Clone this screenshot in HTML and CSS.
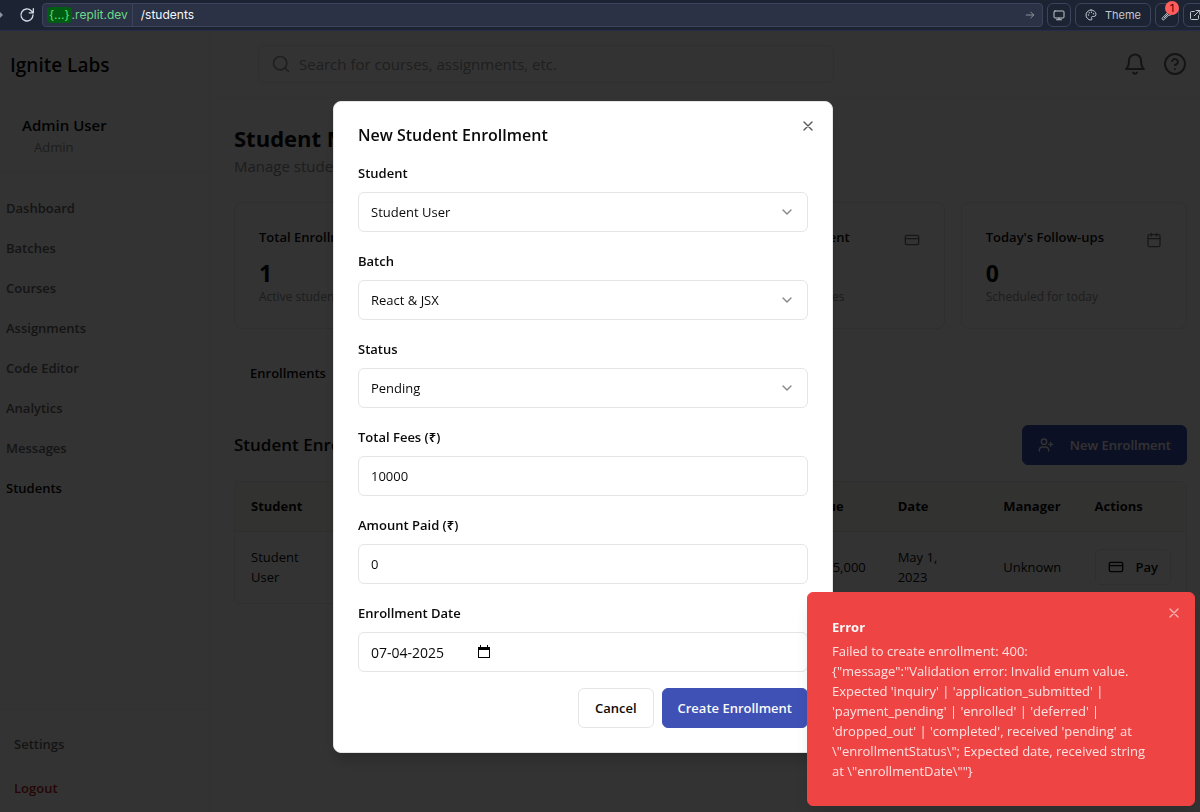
FILE: index.html
```html
<!DOCTYPE html>
<html lang="en">
<head>
<meta charset="utf-8">
<meta name="viewport" content="width=device-width, initial-scale=1">
<title>Ignite Labs - Students</title>
<link rel="stylesheet" href="styles.css">
</head>
<body>
<div class="browser-bar">
  <svg class="edge-arrow" viewBox="0 0 4 10"><path d="M0 2l3 3-3 3z"/></svg>
  <button class="reload" aria-label="Reload">
    <svg class="icon" viewBox="0 0 24 24"><path d="M21 12a9 9 0 1 1-2.600-6.400L21 8.200"/><path d="M21.500 2.500v6.200h-6.200"/></svg>
  </button>
  <div class="url">
    <div class="host"><span class="chip">{...}</span><span>.replit.dev</span></div>
    <input class="path" aria-label="Path" value="/students">
    <svg class="icon go" viewBox="0 0 24 24"><path d="M3 12h18M14 5l7 7-7 7"/></svg>
  </div>
  <button class="tool" aria-label="Device size">
    <svg class="icon" viewBox="0 0 24 24"><rect x="2" y="4" width="20" height="14" rx="2"/><path d="M7 21.500h10M12 18v3"/></svg>
  </button>
  <button class="tool theme">
    <svg class="icon" viewBox="0 0 24 24"><path d="M12 2a10 10 0 0 0 0 20c1.500 0 2-1 2-2 0-1.600-1.200-1.800-1.200-3.200 0-1.200 1-1.800 2.200-1.800h2.500A4.500 4.500 0 0 0 22 10.500C22 6 17.500 2 12 2z"/><circle class="dot" cx="7" cy="12" r="1.300"/><circle class="dot" cx="8.500" cy="7.500" r="1.300"/><circle class="dot" cx="13" cy="6.500" r="1.300"/><circle class="dot" cx="17" cy="9.500" r="1.300"/></svg>
    <span>Theme</span>
  </button>
  <button class="tool" aria-label="Developer tools">
    <svg class="icon" viewBox="0 0 24 24"><path d="M14 7.500a5 5 0 0 1 6.500-4.700l-3 3 .7 2.200 2.200.7 1.600-2.700A5 5 0 0 1 15.500 12L6.500 21a2.300 2.300 0 0 1-3.500-3.500l9-9"/><path d="M6 18l8-8"/></svg>
    <span class="badge">1</span>
  </button>
  <button class="tool last" aria-label="Open in new tab">
    <svg class="icon" viewBox="0 0 24 24"><path d="M19 13.500V19a2 2 0 0 1-2 2H5a2 2 0 0 1-2-2V7a2 2 0 0 1 2-2h5.500M14 3h7.500v7.500M21 3L10.500 13.500"/></svg>
  </button>
</div>

<div class="app">
  <aside class="sidebar">
    <div class="brand">Ignite Labs</div>
    <div class="user"><strong>Admin User</strong><span>Admin</span></div>
    <nav class="nav">
      <a href="#">Dashboard</a>
      <a href="#">Batches</a>
      <a href="#">Courses</a>
      <a href="#">Assignments</a>
      <a href="#">Code Editor</a>
      <a href="#">Analytics</a>
      <a href="#">Messages</a>
      <a href="#" class="active">Students</a>
    </nav>
    <div class="side-foot">
      <a href="#">Settings</a>
      <a href="#" class="logout">Logout</a>
    </div>
  </aside>

  <div class="page">
    <header class="topbar">
      <label class="search">
        <svg class="icon" viewBox="0 0 24 24"><circle cx="11" cy="11" r="8"/><path d="M21 21l-4.300-4.300"/></svg>
        <input type="search" aria-label="Search" placeholder="Search for courses, assignments, etc.">
      </label>
      <div class="top-actions">
        <button aria-label="Notifications"><svg class="icon" viewBox="0 0 24 24"><path d="M6 8.500a6 6 0 0 1 12 0c0 6.500 3 8.500 3 8.500H3s3-2 3-8.500M10 20.500a2.300 2.300 0 0 0 4 0"/></svg></button>
        <button aria-label="Help"><svg class="icon" viewBox="0 0 24 24"><circle cx="12" cy="12" r="10"/><path d="M9.100 9a3 3 0 0 1 5.800 1c0 2-3 3-3 3M12 17h.01"/></svg></button>
      </div>
    </header>

    <main class="main">
      <div class="heading">
        <h1>Student Management</h1>
        <p>Manage student enrollments and payments</p>
      </div>

      <section class="stats">
        <article class="card">
          <div class="card-head"><h3>Total Enrollments</h3></div>
          <b>1</b><small>Active students</small>
        </article>
        <article class="card">
          <div class="card-head"><h3>Inquiries</h3></div>
          <b>0</b><small>Open inquiries</small>
        </article>
        <article class="card">
          <div class="card-head"><h3>Due for Payment</h3>
            <svg class="icon" viewBox="0 0 24 24"><rect x="2" y="5" width="20" height="14" rx="2"/><path d="M2 10h20"/></svg></div>
          <b>1</b><small>With pending fees</small>
        </article>
        <article class="card">
          <div class="card-head"><h3>Today's Follow-ups</h3>
            <svg class="icon" viewBox="0 0 24 24"><rect x="3" y="4" width="18" height="18" rx="2"/><path d="M16 2v4M8 2v4M3 10h18"/></svg></div>
          <b>0</b><small>Scheduled for today</small>
        </article>
      </section>

      <div class="tabs"><button class="tab">Enrollments</button></div>

      <div class="section-head">
        <h2>Student Enrollments</h2>
        <button class="btn primary with-icon">
          <svg class="icon" viewBox="0 0 24 24"><path d="M2 21v-1a5 5 0 0 1 5-5h4a5 5 0 0 1 5 5v1M19 8v6M22 11h-6"/><circle cx="9" cy="7" r="4"/></svg>
          New Enrollment
        </button>
      </div>

      <div class="table-wrap">
        <table>
          <colgroup><col class="c-student"><col class="c-batch"><col class="c-due"><col class="c-date"><col class="c-manager"><col class="c-actions"></colgroup>
          <thead><tr><th>Student</th><th>Batch</th><th>Due</th><th>Date</th><th>Manager</th><th>Actions</th></tr></thead>
          <tbody><tr>
            <td>Student<br>User</td><td>React &amp; JSX</td><td>₹15,000</td><td>May 1,<br>2023</td><td>Unknown</td>
            <td><button class="pay"><svg class="icon" viewBox="0 0 24 24"><rect x="2" y="5" width="20" height="14" rx="2"/><path d="M2 10h20"/></svg>Pay</button></td>
          </tr></tbody>
        </table>
      </div>
    </main>
  </div>
</div>

<div class="overlay">
  <form class="modal" role="dialog" aria-labelledby="dlg-title">
    <h2 id="dlg-title">New Student Enrollment</h2>
    <button type="button" class="close" aria-label="Close"><svg class="icon" viewBox="0 0 24 24"><path d="M18 6L6 18M6 6l12 12"/></svg></button>

    <div class="field"><label for="student">Student</label>
      <div class="control"><select id="student"><option>Student User</option></select><svg class="icon" viewBox="0 0 24 24"><path d="M6 9l6 6 6-6"/></svg></div></div>
    <div class="field"><label for="batch">Batch</label>
      <div class="control"><select id="batch"><option>React &amp; JSX</option></select><svg class="icon" viewBox="0 0 24 24"><path d="M6 9l6 6 6-6"/></svg></div></div>
    <div class="field"><label for="status">Status</label>
      <div class="control"><select id="status"><option>Pending</option></select><svg class="icon" viewBox="0 0 24 24"><path d="M6 9l6 6 6-6"/></svg></div></div>
    <div class="field"><label for="fees">Total Fees (₹)</label>
      <div class="control"><input id="fees" inputmode="numeric" value="10000"></div></div>
    <div class="field"><label for="paid">Amount Paid (₹)</label>
      <div class="control"><input id="paid" inputmode="numeric" value="0"></div></div>
    <div class="field"><label for="date">Enrollment Date</label>
      <div class="control date"><input id="date" value="07-04-2025"><svg class="calendar" viewBox="0 0 12 14"><path d="M0 2h12v11H0z M1 5v7h10V5z M2 0h1v2H2z M9 0h1v2H9z" fill-rule="evenodd"/></svg></div></div>

    <div class="buttons">
      <button type="button" class="btn">Cancel</button>
      <button type="submit" class="btn primary">Create Enrollment</button>
    </div>
  </form>
</div>

<div class="toast" role="alert">
  <strong>Error</strong>
  <p>Failed to create enrollment: 400:<br>{"message":"Validation error: Invalid enum value.<br>Expected 'inquiry' | 'application_submitted' |<br>'payment_pending' | 'enrolled' | 'deferred' |<br>'dropped_out' | 'completed', received 'pending' at<br>\"enrollmentStatus\"; Expected date, received string<br>at \"enrollmentDate\""}</p>
  <button class="close" aria-label="Dismiss"><svg class="icon" viewBox="0 0 24 24"><path d="M18 6L6 18M6 6l12 12"/></svg></button>
</div>
</body>
</html>
```
FILE: styles.css
```css
* { box-sizing: border-box; }

body {
  margin: 0;
  height: 100vh;
  display: flex;
  flex-direction: column;
  overflow: hidden;
  font: 13px/20px "Open Sans", "Noto Sans", sans-serif;
  color: #0a0a0a;
  background: #fcfcfc;
}

h1, h2, h3, p { margin: 0; }
button, input, select { font: inherit; color: inherit; }
button { padding: 0; border: 0; background: none; cursor: pointer; }
a { color: inherit; text-decoration: none; }

.icon {
  flex: none;
  width: 16px;
  height: 16px;
  fill: none;
  stroke: currentColor;
  stroke-width: 2;
  stroke-linecap: round;
  stroke-linejoin: round;
}

/* Browser bar */
.browser-bar {
  flex: none;
  display: flex;
  align-items: center;
  gap: 4px;
  height: 31px;
  overflow: hidden;
  background: #1c2333;
  border-bottom: 1px solid #252d48;
  color: #c2c8cc;
  font: 12px/16px Inter, "Noto Sans", sans-serif;
}
.edge-arrow { flex: none; width: 4px; height: 10px; fill: #8b93a5; }
.reload { display: flex; justify-content: center; width: 30px; margin-right: -4px; padding-left: 7px; }
.reload .icon { color: #d5dae3; }
.url {
  flex: 1;
  display: flex;
  align-items: center;
  height: 24px;
  margin-left: 4px;
  background: #2b3245;
  border: 1px solid #3c445c;
  border-radius: 4px;
}
.host {
  display: flex;
  align-items: center;
  height: 22px;
  padding: 0 4px;
  border-right: 1px solid #3c445c;
  color: #6cd989;
}
.chip { padding: 0 2px; border-radius: 4px; background: #005d12; color: #5fe077; }
.path { flex: 1; min-width: 0; padding: 0 8px; border: 0; outline: 0; background: none; color: #f5f9fc; font-size: 12px; }
.go { width: 10px; height: 10px; margin-right: 7px; color: #9da2a6; }
.tool {
  position: relative;
  flex: none;
  display: flex;
  align-items: center;
  justify-content: center;
  gap: 8px;
  width: 24px;
  height: 24px;
  border: 1px solid #3c445c;
  border-radius: 6px;
}
.tool .icon { width: 12px; height: 12px; }
.tool.theme { width: 76px; font-size: 11px; }
.tool.last { margin-right: -7px; }
.dot { fill: currentColor; stroke: none; }
.badge {
  position: absolute;
  top: -3px;
  right: -1px;
  width: 14px;
  height: 14px;
  border-radius: 7px;
  background: #ff5c5c;
  color: #3d0a0a;
  font-size: 11px;
  line-height: 14px;
}

/* Application shell */
.app { flex: 1; min-height: 0; display: flex; }
.sidebar {
  flex: none;
  display: flex;
  flex-direction: column;
  width: 210px;
  background: #fff;
  border-right: 1px solid #f2f2f2;
  font-weight: 600;
}
.brand { padding: 22px 10px 21px; font-size: 19px; line-height: 24px; }
.user { display: flex; flex-direction: column; height: 75px; padding: 17px 22px 0; border-bottom: 1px solid #f2f2f2; }
.user strong { font-size: 15px; font-weight: 600; }
.user span { padding: 2px 12px; font-weight: 400; color: #8f8f8f; }
.nav { flex: 1; padding-top: 15px; color: #666; }
.nav a { display: block; padding: 10px 6px; }
.nav .active { color: #0a0a0a; }
.side-foot { padding: 12px 14px 2px; border-top: 1px solid #f2f2f2; color: #666; }
.side-foot a { display: block; padding: 12px 0; }
.side-foot .logout { color: #b81c1c; }

.page { flex: 1; min-width: 0; }
.topbar {
  display: flex;
  align-items: center;
  justify-content: space-between;
  height: 67px;
  padding: 0 13px 0 48px;
  background: #fff;
  border-bottom: 1px solid #f2f2f2;
}
.search {
  display: flex;
  align-items: center;
  gap: 8px;
  width: 576px;
  height: 38px;
  padding: 0 12px;
  border: 1px solid #ebebeb;
  border-radius: 6px;
  color: #999;
}
.search .icon { width: 20px; height: 20px; }
.search input { flex: 1; min-width: 0; padding: 0; border: 0; outline: 0; background: none; font-size: 15px; }
.search input::placeholder { color: #999; }
.top-actions { display: flex; gap: 16px; color: #666; }
.top-actions .icon { display: block; width: 24px; height: 24px; }

.main { padding: 24px 13px 24px 24px; }
.heading h1 { font-size: 22px; line-height: 32px; font-weight: 700; }
.heading p { font-size: 15px; line-height: 24px; color: #8f8f8f; }
.stats { display: grid; grid-template-columns: repeat(4, 1fr); gap: 16px; margin: 24px 0; }
.card {
  display: flex;
  flex-direction: column;
  padding: 24px 24px 23px;
  border: 1px solid #ebebeb;
  border-radius: 8px;
  background: #fff;
}
.card-head { display: flex; align-items: flex-end; justify-content: space-between; height: 21px; margin-bottom: 9px; }
.card h3 { font-size: 13px; line-height: 22px; font-weight: 600; }
.card-head .icon { color: #757575; }
.card b { font-size: 23px; line-height: 32px; }
.card small { font-size: 12px; line-height: 16px; color: #8f8f8f; }

.tabs { display: flex; height: 40px; padding: 4px; background: #fcfcfc; border-radius: 6px; }
.tab { padding: 0 12px; background: #fff; border-radius: 4px; font-weight: 600; }
.section-head { display: flex; align-items: center; justify-content: space-between; margin: 32px 0 16px; }
.section-head h2 { font-size: 17px; line-height: 28px; font-weight: 600; }

.btn {
  display: flex;
  align-items: center;
  height: 40px;
  padding: 0 16px;
  border: 1px solid #e5e5e5;
  border-radius: 6px;
  background: #fff;
  font-weight: 600;
}
.btn.primary { padding: 0 15px; border-color: #3f51b5; background: #3f51b5; color: #fafafa; }
.btn.with-icon { gap: 16px; }

.table-wrap { border: 1px solid #ebebeb; border-radius: 6px; overflow: hidden; background: #fff; }
table { width: 100%; border-collapse: collapse; table-layout: fixed; text-align: left; }
th { height: 49px; padding: 0 16px; background: #fafaf5; border-bottom: 1px solid #ebebeb; font-weight: 700; }
td { height: 72px; padding: 0 16px; font-weight: 400; }
.c-student { width: 13%; }
.c-batch { width: 46.6%; }
.c-due { width: 8.4%; }
.c-date { width: 11.1%; }
.c-manager { width: 9.6%; }
.c-actions { width: 11.3%; }
th:nth-child(n+3), td:nth-child(n+3) { padding-right: 0; }
.pay {
  display: flex;
  align-items: center;
  gap: 12px;
  height: 36px;
  padding: 0 12px;
  border: 1px solid #ebebeb;
  border-radius: 6px;
  font-weight: 600;
}

/* Dialog */
.overlay {
  position: fixed;
  inset: 31px 0 0;
  display: flex;
  justify-content: center;
  align-items: flex-start;
  padding: 70px 34px 0 0;
  background: rgba(0, 0, 0, 0.8);
}
.modal {
  position: relative;
  display: flex;
  flex-direction: column;
  gap: 16px;
  width: 500px;
  padding: 24px;
  border: 1px solid #e5e5e5;
  border-radius: 8px;
  background: #fff;
  box-shadow: 0 10px 15px -3px rgba(0, 0, 0, 0.2);
}
.modal h2 { font-size: 16px; line-height: 18px; font-weight: 600; }
.close { position: absolute; top: 16px; right: 16px; display: flex; color: #555; }
.field label { display: block; margin-bottom: 6px; line-height: 26px; font-weight: 600; }
.control { display: grid; align-items: center; }
.control > * { grid-area: 1 / 1; }
.control select, .control input {
  appearance: none;
  width: 100%;
  height: 40px;
  padding: 0 12px;
  border: 1px solid #e5e5e5;
  border-radius: 6px;
  background: #fff;
  outline: 0;
}
.control.date input { font-size: 14px; }
.control .icon { justify-self: end; margin-right: 13px; color: #858585; pointer-events: none; }
.calendar { width: 12px; height: 14px; margin-left: 120px; }
.buttons { display: flex; justify-content: flex-end; gap: 8px; }

/* Toast */
.toast {
  position: fixed;
  right: 5px;
  bottom: 6px;
  width: 388px;
  padding: 24px;
  border: 1px solid #ef4444;
  border-radius: 6px;
  background: #ef4444;
  color: #fafafa;
  box-shadow: 0 10px 15px -3px rgba(0, 0, 0, 0.1);
}
.toast strong { display: block; margin-bottom: 4px; font-weight: 700; }
.toast p { color: #fde1e1; white-space: nowrap; }
.toast .close { top: 12px; right: 12px; color: #f9b4b4; }
```
